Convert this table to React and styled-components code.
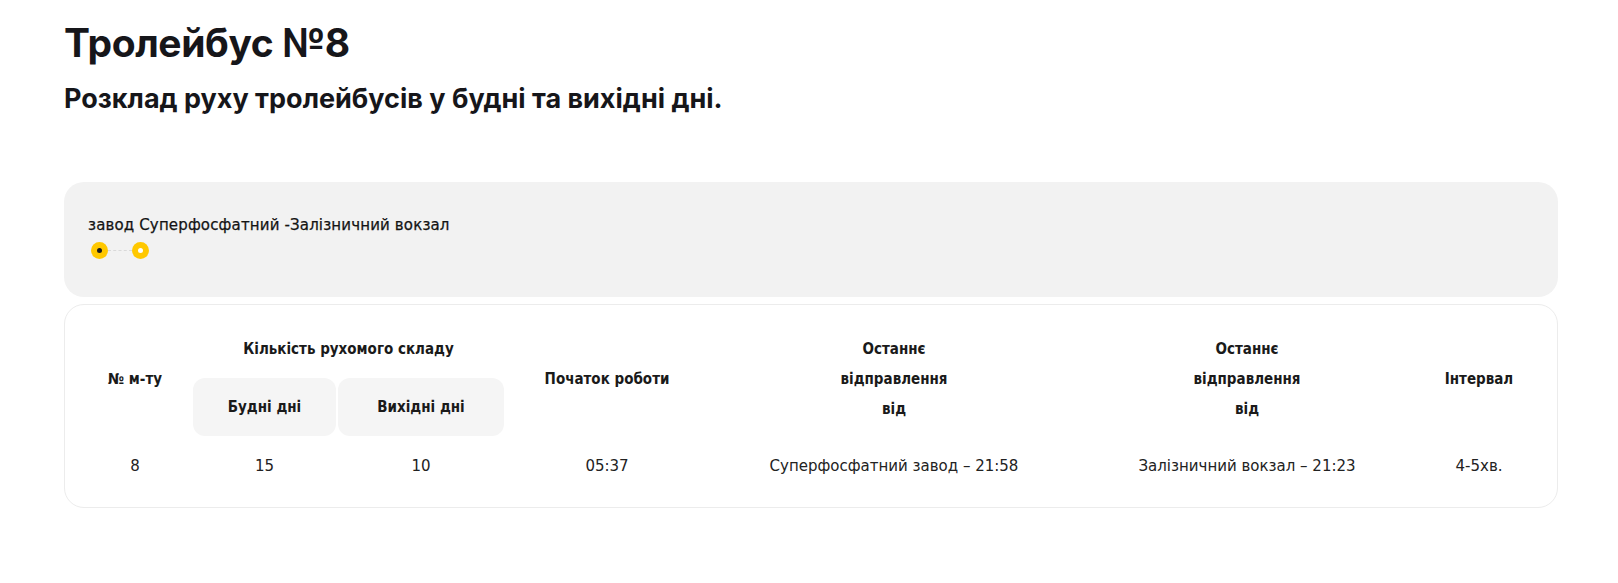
import styled, { createGlobalStyle } from 'styled-components';

const GlobalStyle = createGlobalStyle`
  body {
    margin: 0;
    background: #ffffff;
    font-family: "DejaVu Sans", sans-serif;
    color: #1c1c1c;
  }
`;

const columns = [112, 143, 166, 202, 368, 334, 126];

const row = {
  number: '8',
  weekdays: '15',
  weekends: '10',
  start: '05:37',
  lastFrom: 'Суперфосфатний завод – 21:58',
  lastTo: 'Залізничний вокзал – 21:23',
  interval: '4-5хв.',
};

const App = () => {
  return (
    <>
      <GlobalStyle />
      <Page>
        <Title>Тролейбус №8</Title>
        <Subtitle>Розклад руху тролейбусів у будні та вихідні дні.</Subtitle>

        <RouteCard>
          <RouteName>завод Суперфосфатний -Залізничний вокзал</RouteName>
          <RouteLine>
            <Stop $inner="#1c1c1c" />
            <Connector />
            <Stop $inner="#ffffff" />
          </RouteLine>
        </RouteCard>

        <TableCard>
          <Table>
            <colgroup>
              {columns.map((w, i) => (
                <col key={i} style={{ width: w }} />
              ))}
            </colgroup>
            <thead>
              <tr>
                <HeadCell rowSpan={2}>№ м-ту</HeadCell>
                <HeadCell colSpan={2} $height={54}>Кількість рухомого складу</HeadCell>
                <HeadCell rowSpan={2}>Початок роботи</HeadCell>
                <HeadCell rowSpan={2}>
                  Останнє<br />відправлення<br />від
                </HeadCell>
                <HeadCell rowSpan={2}>
                  Останнє<br />відправлення<br />від
                </HeadCell>
                <HeadCell rowSpan={2}>Інтервал</HeadCell>
              </tr>
              <tr>
                <HeadCell $height={58} $shaded>Будні дні</HeadCell>
                <HeadCell $height={58} $shaded>Вихідні дні</HeadCell>
              </tr>
            </thead>
            <tbody>
              <tr>
                <Cell>{row.number}</Cell>
                <Cell>{row.weekdays}</Cell>
                <Cell>{row.weekends}</Cell>
                <Cell>{row.start}</Cell>
                <Cell>{row.lastFrom}</Cell>
                <Cell>{row.lastTo}</Cell>
                <Cell>{row.interval}</Cell>
              </tr>
            </tbody>
          </Table>
        </TableCard>
      </Page>
    </>
  );
};

export default App;

const Page = styled.main`
  padding: 19px 60px 40px 64px;
`;

const Title = styled.h1`
  margin: 0;
  font-family: Inter, "Noto Sans", sans-serif;
  font-weight: 700;
  font-size: 39px;
  line-height: 48px;
  letter-spacing: -0.01em;
  color: #16161a;
`;

const Subtitle = styled.h2`
  margin: 15px 0 0;
  font-family: Inter, "Noto Sans", sans-serif;
  font-weight: 700;
  font-size: 27px;
  line-height: 33px;
  color: #16161a;
`;

const RouteCard = styled.section`
  margin-top: 67px;
  background: #f2f2f2;
  border-radius: 20px;
  padding: 34px 24px 38px;
`;

const RouteName = styled.div`
  font-family: "DejaVu Sans", sans-serif;
  font-size: 15px;
  line-height: 18px;
  letter-spacing: 0.15px;
  color: #141414;
  -webkit-text-stroke: 0.25px #141414;
`;

const RouteLine = styled.div`
  display: flex;
  align-items: center;
  margin-top: 8px;
  padding-left: 3px;
`;

const Stop = styled.span`
  position: relative;
  width: 17px;
  height: 17px;
  border-radius: 50%;
  background: #ffc800;
  display: flex;
  align-items: center;
  justify-content: center;

  &::after {
    content: '';
    width: 5px;
    height: 5px;
    border-radius: 50%;
    background: ${(p) => p.$inner};
  }
`;

const Connector = styled.span`
  width: 24px;
  border-top: 1px dashed #d9d9d9;
`;

const TableCard = styled.section`
  margin-top: 7px;
  border: 1px solid #ececec;
  border-radius: 20px;
  padding: 15px 13px 11px 12px;
`;

const Table = styled.table`
  width: 100%;
  table-layout: fixed;
  border-collapse: separate;
  border-spacing: 2px;
`;

const HeadCell = styled.th`
  padding: 0;
  height: ${(p) => (p.$height ? `${p.$height}px` : 'auto')};
  text-align: center;
  vertical-align: middle;
  font-family: "DejaVu Sans Condensed", "DejaVu Sans", sans-serif;
  font-stretch: condensed;
  font-weight: 700;
  font-size: 15px;
  line-height: 30px;
  color: #1a1a1a;
  background: ${(p) => (p.$shaded ? '#f5f5f5' : 'transparent')};
  border-radius: ${(p) => (p.$shaded ? '12px' : '0')};
`;

const Cell = styled.td`
  padding: 0;
  height: 56px;
  text-align: center;
  vertical-align: middle;
  font-family: "DejaVu Sans", sans-serif;
  font-size: 15px;
  color: #222222;
`;
